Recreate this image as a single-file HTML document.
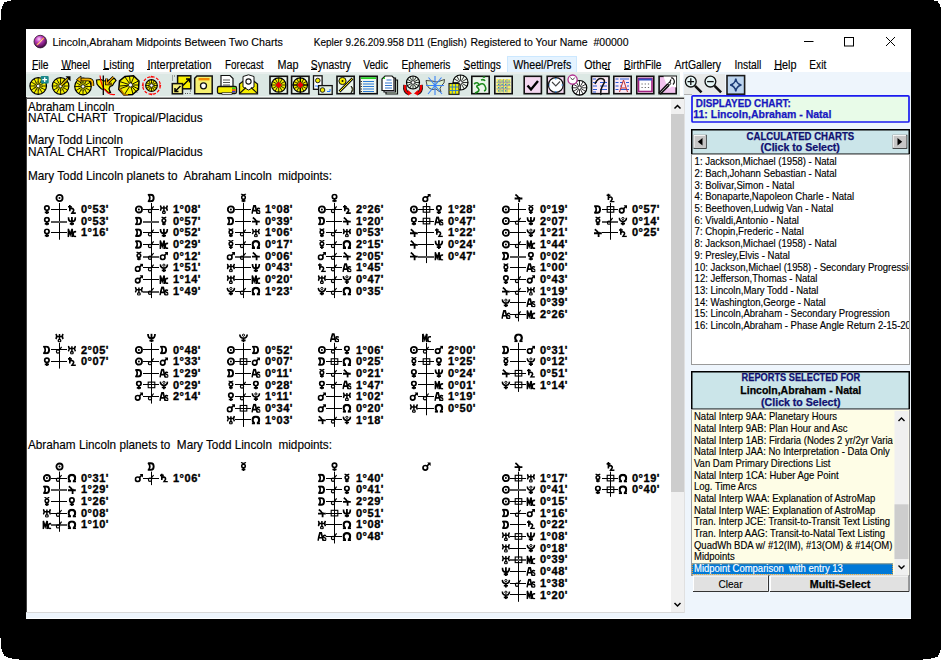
<!DOCTYPE html>
<html><head><meta charset="utf-8">
<style>
html,body{margin:0;padding:0;background:#fff;width:941px;height:660px;overflow:hidden}
svg{display:block}
text{font-family:"Liberation Sans",sans-serif;white-space:pre}
.deg{font-family:"Liberation Sans",sans-serif;font-weight:bold;font-size:11px;fill:#000;stroke:#000;stroke-width:0.35px;letter-spacing:0.5px}
.ui{font-size:11.5px;fill:#000;stroke:#000;stroke-width:0.15px}
.mn{font-size:12.3px;fill:#000;stroke:#000;stroke-width:0.15px}
.rt{font-size:12.4px;fill:#000;stroke:#000;stroke-width:0.15px}
.rp{font-size:10px;fill:#000;stroke:#000;stroke-width:0.15px}
.rpb{font-size:10px;font-weight:bold;stroke-width:0.25px}
</style></head><body>

<svg width="0" height="0" style="position:absolute">
<defs>
<symbol id="g-sun" viewBox="0 0 9 9"><circle cx="4.5" cy="4.5" r="3.1" fill="none" stroke="#000" stroke-width="1.8"/><circle cx="4.5" cy="4.5" r="1" fill="#000"/></symbol>
<symbol id="g-moon" viewBox="0 0 9 9"><path d="M1.6,1.2 H3.9 C7.6,1.2 7.6,7.8 3.9,7.8 H1.6 C3.1,6 3.1,3 1.6,1.2 Z" fill="none" stroke="#000" stroke-width="1.9" stroke-linejoin="round"/></symbol>
<symbol id="g-mer" viewBox="0 0 9 9"><path d="M2.2,0.2 Q4.5,2.6 6.8,0.2" fill="none" stroke="#000" stroke-width="1.4"/><circle cx="4.5" cy="3.9" r="1.8" fill="none" stroke="#000" stroke-width="1.5"/><path d="M4.5,5.6V9M2.6,7.4H6.4" stroke="#000" stroke-width="1.6"/></symbol>
<symbol id="g-ven" viewBox="0 0 9 9"><circle cx="4.5" cy="3.2" r="2.2" fill="none" stroke="#000" stroke-width="1.7"/><path d="M4.5,5.3V9M2.4,7.4H6.6" stroke="#000" stroke-width="1.7"/></symbol>
<symbol id="g-mar" viewBox="0 0 9 9"><circle cx="3.3" cy="5.7" r="2.3" fill="none" stroke="#000" stroke-width="1.7"/><path d="M5.1,3.9L7.4,1.6" stroke="#000" stroke-width="1.7"/><path d="M5.2,0.4H8.6V3.8Z" fill="#000"/></symbol>
<symbol id="g-jup" viewBox="0 0 9 9"><path d="M1.4,0.9 Q3.8,2.4 4.9,4.9 M0.6,5 H8.4 M5.2,3.6 V8.8" fill="none" stroke="#000" stroke-width="1.8"/></symbol>
<symbol id="g-sat" viewBox="0 0 9 9"><path d="M2.4,0V6.4M0.6,1.8H4.4M2.4,4.4 Q4.6,2.6 6,4.4 Q6.8,5.6 5.2,7.2 L4.6,8.2 H8.4" fill="none" stroke="#000" stroke-width="1.6"/></symbol>
<symbol id="g-ura" viewBox="0 0 9 9"><path d="M0.9,0.6 Q2.7,3.2 0.9,5.8M8.1,0.6 Q6.3,3.2 8.1,5.8M1.8,3.2H7.2M4.5,0.8V6" fill="none" stroke="#000" stroke-width="1.5"/><circle cx="4.5" cy="7.4" r="1.3" fill="none" stroke="#000" stroke-width="1.3"/></symbol>
<symbol id="g-nep" viewBox="0 0 9 9"><path d="M1,0.8 Q1,5.2 4.5,5.2 Q8,5.2 8,0.8M4.5,0.4V9M2.4,7.3H6.6" fill="none" stroke="#000" stroke-width="1.8"/></symbol>
<symbol id="g-plu" viewBox="0 0 9 9"><path d="M0.8,1.2 Q1.2,4.9 4.5,4.9 Q7.8,4.9 8.2,1.2M4.5,4.9V9M2.4,7.1H6.6" fill="none" stroke="#000" stroke-width="1.7"/><circle cx="4.5" cy="1.9" r="1.1" fill="none" stroke="#000" stroke-width="1"/></symbol>
<symbol id="g-node" viewBox="0 0 9 9"><path d="M3,7.9 Q1,6.6 1.2,4.2 Q1.5,1.2 4.5,1.2 Q7.5,1.2 7.8,4.2 Q8,6.6 6,7.9" fill="none" stroke="#000" stroke-width="2.2"/><path d="M0.4,8.1H3.6M5.4,8.1H8.6" stroke="#000" stroke-width="1.8"/></symbol>
<symbol id="g-as" viewBox="0 0 9 9"><path d="M0.4,8.8L2.6,0.6H3.8L5.8,8.8M1.4,5.8H4.8" fill="none" stroke="#000" stroke-width="1.7"/><path d="M8.8,3.9 Q6.2,2.7 6,4.5 Q6,5.5 7.5,5.9 Q9.2,6.5 8.6,7.9 Q7.6,9 5.8,8.2" fill="none" stroke="#000" stroke-width="1.5"/></symbol>
<symbol id="g-mc" viewBox="0 0 9 9"><path d="M0.8,9V0.6L2.8,6.4L4.8,0.6V9" fill="none" stroke="#000" stroke-width="1.7"/><path d="M8.9,3.6 Q5.8,2.8 5.8,6 Q5.8,9.2 8.9,8.2" fill="none" stroke="#000" stroke-width="1.7"/></symbol>
<symbol id="a-conj" viewBox="0 0 9 9"><circle cx="3" cy="6.1" r="1.6" fill="none" stroke="#000" stroke-width="1.2"/><path d="M4.1,4.9 L6.6,1.4" stroke="#000" stroke-width="1.2"/></symbol>
<symbol id="a-sq" viewBox="0 0 9 9"><rect x="1.2" y="1.7" width="6.6" height="5.6" fill="none" stroke="#000" stroke-width="1.1"/></symbol>
</defs></svg>

<svg width="941" height="660" viewBox="0 0 941 660">
<rect width="941" height="660" fill="#fff"/>
<path d="M11,0 L934,0 L934,1 L938,1 L938,3 L939,3 L939,4 L940,4 L940,7 L941,7 L941,650 L940,650 L940,653 L939,653 L939,655 L938,655 L938,657 L935,657 L935,658 L931,658 L931,659 L923,659 L923,660 L19,660 L19,659 L12,659 L12,658 L8,658 L8,657 L6,657 L6,656 L4,656 L4,654 L3,654 L3,652 L2,652 L2,649 L1,649 L1,638 L0,638 L0,20 L1,20 L1,9 L2,9 L2,6 L3,6 L3,4 L4,4 L4,2 L7,2 L7,1 L11,1 Z" fill="#000" shape-rendering="crispEdges"/>
<!-- window -->
<rect x="26" y="29" width="885" height="590" fill="#fff"/>
<!-- title bar -->
<defs><radialGradient id="ico" cx="0.4" cy="0.3" r="0.75"><stop offset="0" stop-color="#ffd0ff"/><stop offset="0.35" stop-color="#c040c0"/><stop offset="0.8" stop-color="#601060"/><stop offset="1" stop-color="#200020"/></radialGradient></defs>
<circle cx="40.3" cy="41.6" r="6.3" fill="url(#ico)" stroke="#2a102a" stroke-width="0.8"/>
<path d="M36.8,45.2 L43.8,38" stroke="#ffa040" stroke-width="1.2"/><path d="M38,44.5 L42.5,39.5" stroke="#ffffff" stroke-width="0.6"/>
<text class="ui" x="52.5" y="45.6" textLength="230.3" lengthAdjust="spacingAndGlyphs">Lincoln,Abraham Midpoints Between Two Charts</text>
<text class="ui" x="313.7" y="45.6" textLength="153.1" lengthAdjust="spacingAndGlyphs">Kepler 9.26.209.958 D11 (English)</text>
<text class="ui" x="470.4" y="45.6" textLength="158.1" lengthAdjust="spacingAndGlyphs">Registered to Your Name  #00000</text>
<rect x="804" y="41" width="9.5" height="1" fill="#000"/>
<rect x="844.5" y="37.5" width="9" height="8.5" fill="none" stroke="#000" stroke-width="1"/>
<path d="M886,37 L895,46 M895,37 L886,46" stroke="#000" stroke-width="1"/>
<!-- menu -->
<rect x="507.5" y="56.5" width="69" height="16" fill="#e5f3ff" stroke="#cce8ff" stroke-width="1"/>
<g class="ui">
<text class="mn" x="32" y="68.5" textLength="16.6" lengthAdjust="spacingAndGlyphs">File</text>
<text class="mn" x="61.4" y="68.5" textLength="28.6" lengthAdjust="spacingAndGlyphs">Wheel</text>
<text class="mn" x="103.3" y="68.5" textLength="31" lengthAdjust="spacingAndGlyphs">Listing</text>
<text class="mn" x="147.5" y="68.5" textLength="64.1" lengthAdjust="spacingAndGlyphs">Interpretation</text>
<text class="mn" x="225" y="68.5" textLength="38.6" lengthAdjust="spacingAndGlyphs">Forecast</text>
<text class="mn" x="277.6" y="68.5" textLength="21" lengthAdjust="spacingAndGlyphs">Map</text>
<text class="mn" x="310.8" y="68.5" textLength="40.2" lengthAdjust="spacingAndGlyphs">Synastry</text>
<text class="mn" x="363.2" y="68.5" textLength="24.8" lengthAdjust="spacingAndGlyphs">Vedic</text>
<text class="mn" x="401.4" y="68.5" textLength="49.1" lengthAdjust="spacingAndGlyphs">Ephemeris</text>
<text class="mn" x="463.5" y="68.5" textLength="37.3" lengthAdjust="spacingAndGlyphs">Settings</text>
<text class="mn" x="513.3" y="68.5" textLength="58" lengthAdjust="spacingAndGlyphs">Wheel/Prefs</text>
<text class="mn" x="584.3" y="68.5" textLength="26.7" lengthAdjust="spacingAndGlyphs">Other</text>
<text class="mn" x="623.8" y="68.5" textLength="37.8" lengthAdjust="spacingAndGlyphs">BirthFile</text>
<text class="mn" x="674.6" y="68.5" textLength="46.4" lengthAdjust="spacingAndGlyphs">ArtGallery</text>
<text class="mn" x="734.5" y="68.5" textLength="26.9" lengthAdjust="spacingAndGlyphs">Install</text>
<text class="mn" x="774.2" y="68.5" textLength="22.3" lengthAdjust="spacingAndGlyphs">Help</text>
<text class="mn" x="809.3" y="68.5" textLength="17" lengthAdjust="spacingAndGlyphs">Exit</text>
</g>
<g fill="#000">
<rect x="32" y="69" width="6" height="1"/>
<rect x="61" y="69" width="10" height="1"/>
<rect x="103" y="69" width="6" height="1"/>
<rect x="147" y="69" width="3" height="1"/>
<rect x="311" y="69" width="6" height="1"/>
<rect x="463" y="69" width="6" height="1"/>
<rect x="605" y="69" width="5" height="1"/>
<rect x="624" y="69" width="7" height="1"/>
<rect x="774" y="69" width="8" height="1"/>
</g>
<!-- right panel bg -->
<rect x="683" y="72" width="228" height="547" fill="#eef5fc"/>
<rect x="26" y="613" width="885" height="6" fill="#eef5fc"/>
<rect x="26" y="618" width="885" height="1" fill="#fff"/>
<!-- toolbar -->
<rect x="26" y="72" width="654" height="25" fill="#dce8e4"/>
<rect x="26" y="72" width="654" height="2" fill="#e8eeec"/>
<rect x="684" y="74" width="41" height="21" fill="#e7e9e9"/><rect x="684" y="94" width="8" height="1" fill="#b0b0b0"/>
<circle cx="38.2" cy="86" r="8.3" fill="#f6f000" stroke="#000" stroke-width="1.2"/><path d="M40.40,86.00L46.50,86.00M40.11,87.10L45.39,90.15M39.30,87.91L42.35,93.19M38.20,88.20L38.20,94.30M37.10,87.91L34.05,93.19M36.29,87.10L31.01,90.15M36.00,86.00L29.90,86.00M36.29,84.90L31.01,81.85M37.10,84.09L34.05,78.81M38.20,83.80L38.20,77.70M39.30,84.09L42.35,78.81M40.11,84.90L45.39,81.85" stroke="#000" stroke-width="0.8"/><circle cx="38.2" cy="86" r="4.15" fill="none" stroke="#000" stroke-width="0.6" stroke-dasharray="1.2 1.4"/><circle cx="38.2" cy="86" r="1.8" fill="#fff" stroke="#000" stroke-width="0.8"/><rect x="40.7" y="75.9" width="8" height="7.6" rx="1" fill="#18878a"/><path d="M44.7,77.3V82.1M42.3,79.7H47.1" stroke="#fff" stroke-width="1.3"/><circle cx="60.6" cy="86" r="8.3" fill="#f6f000" stroke="#000" stroke-width="1.2"/><path d="M62.80,86.00L68.90,86.00M62.51,87.10L67.79,90.15M61.70,87.91L64.75,93.19M60.60,88.20L60.60,94.30M59.50,87.91L56.45,93.19M58.69,87.10L53.41,90.15M58.40,86.00L52.30,86.00M58.69,84.90L53.41,81.85M59.50,84.09L56.45,78.81M60.60,83.80L60.60,77.70M61.70,84.09L64.75,78.81M62.51,84.90L67.79,81.85" stroke="#000" stroke-width="0.8"/><circle cx="60.6" cy="86" r="4.15" fill="none" stroke="#000" stroke-width="0.6" stroke-dasharray="1.2 1.4"/><circle cx="60.6" cy="86" r="1.8" fill="#fff" stroke="#000" stroke-width="0.8"/><path d="M61,85.5L68.6,77.6" stroke="#000" stroke-width="2.6"/><path d="M61,85.5L68.6,77.6" stroke="#f0c800" stroke-width="1.2"/><path d="M65.5,76.2H70.5V81.2Z" fill="#000"/><circle cx="83" cy="86.5" r="8.3" fill="#f6f000" stroke="#000" stroke-width="1.2"/><path d="M85.20,86.50L91.30,86.50M84.91,87.60L90.19,90.65M84.10,88.41L87.15,93.69M83.00,88.70L83.00,94.80M81.90,88.41L78.85,93.69M81.09,87.60L75.81,90.65M80.80,86.50L74.70,86.50M81.09,85.40L75.81,82.35M81.90,84.59L78.85,79.31M83.00,84.30L83.00,78.20M84.10,84.59L87.15,79.31M84.91,85.40L90.19,82.35" stroke="#000" stroke-width="0.8"/><circle cx="83" cy="86.5" r="4.15" fill="none" stroke="#000" stroke-width="0.6" stroke-dasharray="1.2 1.4"/><circle cx="83" cy="86.5" r="1.8" fill="#fff" stroke="#000" stroke-width="0.8"/><path d="M78,79.5 H88 Q92.5,79.5 92.5,83.5 V86" fill="none" stroke="#000" stroke-width="3.4"/><path d="M78,79.5 H88 Q92.5,79.5 92.5,83.5 V86" fill="none" stroke="#f0b000" stroke-width="1.8"/><path d="M81,76 L76.5,79.5 L81,83Z" fill="#f0b000" stroke="#000" stroke-width="0.8"/><path d="M96.5,80 L101,79.5 L104,81 L108,80.5 L111,79 L114.5,78.5 L116,80.5 L114,83 L112.5,85.5 L110,86.5 L109,89 L110.5,92.5 L107.5,92 L105,89.5 L101.5,89 L99,86.5 L97,84Z" fill="#f6f000" stroke="#000" stroke-width="1.2"/><path d="M113.5,77 L107,83.5 M106.5,78.5 V84 H112" fill="none" stroke="#000" stroke-width="2.6"/><path d="M113.5,77 L107,83.5 M106.5,78.5 V84 H112" fill="none" stroke="#f0a800" stroke-width="1.1"/><path d="M100,75.5 Q101,88 108,93 Q111,95 115,94.5" fill="none" stroke="#f00" stroke-width="1.1"/><path d="M103.3,75.5V95" stroke="#000" stroke-width="1.3"/><path d="M125,76.5 L133.5,75.8 L139,81 L138.5,89.5 L132.5,94.5 L124,95 L118.8,89.5 L119.5,81Z" fill="#f6f000" stroke="#000" stroke-width="1.5"/><path d="M130.5,85 L125,77 M130.5,85 L134,76.5 M130.5,85 L138.5,81 M130.5,85 L138.5,89 M130.5,85 L133,94 M130.5,85 L124.5,94.5 M130.5,85 L119.5,89 M130.5,85 L119.5,81.5 M130.5,85 L129.5,76 M130.5,85 L137,92.5 M130.5,85 L120,86 M130.5,85 L138.5,85" stroke="#000" stroke-width="0.9"/><path d="M119.5,88 L124,94.5 L128,94.8" fill="none" stroke="#b07000" stroke-width="1.6"/><circle cx="130.5" cy="85" r="2" fill="#fff" stroke="#000" stroke-width="0.6"/><circle cx="151.5" cy="85.5" r="8.8" fill="none" stroke="#f00" stroke-width="1.2" stroke-dasharray="3 1.6"/><circle cx="151.5" cy="85.5" r="5.8" fill="#f6f000" stroke="#000" stroke-width="1.2"/><path d="M153.70,85.50L157.30,85.50M153.41,86.60L156.52,88.40M152.60,87.41L154.40,90.52M151.50,87.70L151.50,91.30M150.40,87.41L148.60,90.52M149.59,86.60L146.48,88.40M149.30,85.50L145.70,85.50M149.59,84.40L146.48,82.60M150.40,83.59L148.60,80.48M151.50,83.30L151.50,79.70M152.60,83.59L154.40,80.48M153.41,84.40L156.52,82.60" stroke="#000" stroke-width="0.8"/><circle cx="151.5" cy="85.5" r="2.90" fill="none" stroke="#000" stroke-width="0.6" stroke-dasharray="1.2 1.4"/><circle cx="151.5" cy="85.5" r="1.8" fill="#fff" stroke="#000" stroke-width="0.8"/><path d="M151.5,75.6l-1.5,2h3Z M151.5,95.4l-1.5,-2h3Z M141.6,85.5l2,-1.5v3Z M161.4,85.5l-2,-1.5v3Z" fill="#f00"/><rect x="177.6" y="75.8" width="13.2" height="13" fill="#f8f000" stroke="#111" stroke-width="1.5"/><rect x="172.3" y="83.6" width="10.2" height="10.2" fill="#f6f080" stroke="#111" stroke-width="1.5"/><path d="M183,85.5 L189,79.5 M186,79 H189.5 V82.5" fill="none" stroke="#000" stroke-width="1.3"/><path d="M180.5,86 L175,91.5 M175,88 V91.5 H178.5" fill="none" stroke="#000" stroke-width="1.5"/><path d="M172,76 h1 M172,78 h1 M172,80 h1 M174,76 h1 M185,93.5 h1 M187,93.5 h1 M189.5,93.5 h1 M190,91 h1" stroke="#555" stroke-width="1"/><path d="M197,76 H212.2 V93.8 H194.7 V78.3Z" fill="#f6f070" stroke="#111" stroke-width="1.5"/><rect x="198.5" y="78" width="11" height="2.4" fill="#f08a00"/><circle cx="203.5" cy="85.8" r="3" fill="#fff" stroke="#111" stroke-width="1.3"/><path d="M221,75.5 H230 L233,78.5 V88 H221Z" fill="#fff" stroke="#111" stroke-width="1.2"/><path d="M223,80h7M223,82.5h7M223,85h7" stroke="#444" stroke-width="0.9"/><rect x="217.5" y="86.5" width="19" height="7" rx="1.5" fill="#f6ee00" stroke="#111" stroke-width="1.3"/><rect x="232" y="87.5" width="3.5" height="1.4" fill="#2c2"/><rect x="232" y="89.3" width="3.5" height="1.4" fill="#e22"/><rect x="232" y="91.1" width="3.5" height="1.4" fill="#22e"/><rect x="222" y="92.8" width="10" height="1.5" fill="#fff" stroke="#111" stroke-width="0.6"/><path d="M239.5,84 L248.5,77 L257.5,84 V93.8 H239.5Z" fill="#f6ee00" stroke="#111" stroke-width="1.3"/><path d="M243,76.5 L248.5,74.8 L254,76.5 V87 L248.5,90 L243,87Z" fill="#fff" stroke="#111" stroke-width="1"/><circle cx="248.5" cy="81.5" r="2.6" fill="none" stroke="#111" stroke-width="1.1"/><path d="M239.5,93.5 L246,87.5 M257.5,93.5 L251,87.5" stroke="#111" stroke-width="1.1"/><rect x="270.0" y="76.3" width="17.4" height="17.4" fill="#eaf5ea" stroke="#111" stroke-width="1.6"/><circle cx="278.7" cy="85" r="7.2" fill="#f6f000" stroke="#000" stroke-width="1.2"/><path d="M280.90,85.00L285.90,85.00M280.61,86.10L284.94,88.60M279.80,86.91L282.30,91.24M278.70,87.20L278.70,92.20M277.60,86.91L275.10,91.24M276.79,86.10L272.46,88.60M276.50,85.00L271.50,85.00M276.79,83.90L272.46,81.40M277.60,83.09L275.10,78.76M278.70,82.80L278.70,77.80M279.80,83.09L282.30,78.76M280.61,83.90L284.94,81.40" stroke="#000" stroke-width="0.8"/><circle cx="278.7" cy="85" r="1.8" fill="#fff" stroke="#000" stroke-width="0.8"/><path d="M278.7,81.8 L281.9,85 L278.7,88.2 L275.5,85Z" fill="#e00"/><rect x="291.6" y="76.3" width="17.4" height="17.4" fill="#eaf5ea" stroke="#111" stroke-width="1.6"/><circle cx="300.3" cy="85" r="7.2" fill="#f6f000" stroke="#000" stroke-width="1.2"/><path d="M302.50,85.00L307.50,85.00M302.21,86.10L306.54,88.60M301.40,86.91L303.90,91.24M300.30,87.20L300.30,92.20M299.20,86.91L296.70,91.24M298.39,86.10L294.06,88.60M298.10,85.00L293.10,85.00M298.39,83.90L294.06,81.40M299.20,83.09L296.70,78.76M300.30,82.80L300.30,77.80M301.40,83.09L303.90,78.76M302.21,83.90L306.54,81.40" stroke="#000" stroke-width="0.8"/><circle cx="300.3" cy="85" r="3.60" fill="none" stroke="#000" stroke-width="0.6" stroke-dasharray="1.2 1.4"/><circle cx="300.3" cy="85" r="1.8" fill="#fff" stroke="#000" stroke-width="0.8"/><path d="M300.3,77V93M292.3,85H308.3" stroke="#000" stroke-width="1.1"/><path d="M300.3,81.8 L303.5,85 L300.3,88.2 L297.1,85Z" fill="#e00"/><rect x="313.5" y="75.8" width="8.6" height="13.5" fill="#fff" stroke="#111" stroke-width="1.3"/><circle cx="317.8" cy="80.5" r="2.3" fill="#f2ea00" stroke="#111" stroke-width="0.9"/><path d="M315,86h3v1.5" stroke="#27f" stroke-width="0.9" fill="none"/><rect x="318.6" y="85.6" width="13.6" height="8.8" fill="#e6f2e6" stroke="#111" stroke-width="1.3"/><circle cx="322.5" cy="90" r="2.3" fill="#f2ea00" stroke="#111" stroke-width="0.9"/><path d="M327,91.5h3v-2.5" stroke="#27f" stroke-width="1" fill="none"/><rect x="337.0" y="76.3" width="17.20000000000001" height="17.4" fill="#eaf5ea" stroke="#111" stroke-width="1.6"/><circle cx="342.5" cy="81" r="3.6" fill="#f2ea00" stroke="#111" stroke-width="1"/><circle cx="342.5" cy="81" r="1" fill="#111"/><path d="M339.5,91.5 L352.5,78.5" stroke="#111" stroke-width="2.6"/><path d="M339.5,91.5 L352.5,78.5" stroke="#f2ea00" stroke-width="1"/><path d="M351,86 Q355,89 351,93 Q353.5,89 351,86Z" fill="#f2ea00" stroke="#111" stroke-width="0.8"/><rect x="359.8" y="76.3" width="17.4" height="17.4" fill="#eef6ee" stroke="#111" stroke-width="1.6"/><rect x="361" y="77.3" width="15" height="1.6" fill="#1c1"/><path d="M363,81.5h11M363,84h11M363,86.5h11M363,89h11M363,91.5h11" stroke="#2a7bd6" stroke-width="1"/><path d="M360.8,81.5h1M360.8,84h1M360.8,86.5h1M360.8,89h1M360.8,91.5h1" stroke="#000" stroke-width="1"/><path d="M386,80 H397.5 V94 H386Z" fill="#d6ead6" stroke="#111" stroke-width="1.2"/><path d="M384,78 H395.5 V92 H384Z" fill="#eef" stroke="#111" stroke-width="1.2"/><path d="M385,76 H392 L394,78 V90.5 H382 V79Z" fill="#fff" stroke="#111" stroke-width="1.2"/><path d="M386.5,80h5M385,83h7M385,85.5h7M385,88h7" stroke="#37c" stroke-width="1"/><path d="M382.5,79 L385,76.5 V79Z" fill="#3c3"/><circle cx="413" cy="82.5" r="6.5" fill="#e8f4e8" stroke="#000" stroke-width="1.2"/><path d="M415.20,82.50L419.50,82.50M414.91,83.60L418.63,85.75M414.10,84.41L416.25,88.13M413.00,84.70L413.00,89.00M411.90,84.41L409.75,88.13M411.09,83.60L407.37,85.75M410.80,82.50L406.50,82.50M411.09,81.40L407.37,79.25M411.90,80.59L409.75,76.87M413.00,80.30L413.00,76.00M414.10,80.59L416.25,76.87M414.91,81.40L418.63,79.25" stroke="#000" stroke-width="0.8"/><circle cx="413" cy="82.5" r="1.8" fill="#fff" stroke="#000" stroke-width="0.8"/><path d="M405,85 Q404,92 409,93.5 M421,85 Q422,92 417,93.5" fill="none" stroke="#111" stroke-width="3.6"/><path d="M405,85 Q404,92 409,93.5 M421,85 Q422,92 417,93.5" fill="none" stroke="#e00" stroke-width="2.2"/><path d="M408,90 L412,93.5 L408,95.5Z M418,90 L414,93.5 L418,95.5Z" fill="#e00"/><path d="M426,80.5 L432,81 L437,82 L440,81 L444.5,79.5 L444,83 L441.5,85.5 L440,88.5 L441,92 L438.5,91 L436,89 L432,89.5 L429,88 L427,85Z" fill="#dcefd0" stroke="#222" stroke-width="0.8"/><path d="M435,76V95M426,85.5H444M428.5,77.5L442,94M441.5,77.5L428,94" stroke="#3b82f6" stroke-width="1.1"/><circle cx="460.5" cy="82.5" r="7.5" fill="#eef6ee" stroke="#000" stroke-width="1.2"/><path d="M462.70,82.50L468.00,82.50M462.41,83.60L467.00,86.25M461.60,84.41L464.25,89.00M460.50,84.70L460.50,90.00M459.40,84.41L456.75,89.00M458.59,83.60L454.00,86.25M458.30,82.50L453.00,82.50M458.59,81.40L454.00,78.75M459.40,80.59L456.75,76.00M460.50,80.30L460.50,75.00M461.60,80.59L464.25,76.00M462.41,81.40L467.00,78.75" stroke="#000" stroke-width="0.8"/><circle cx="460.5" cy="82.5" r="1.8" fill="#fff" stroke="#000" stroke-width="0.8"/><rect x="449" y="83.5" width="10" height="10.8" fill="#f6ee00" stroke="#111" stroke-width="1.1"/><path d="M452.3,84v10M455.6,84v10M449.5,87h9M449.5,90.5h9" stroke="#27c" stroke-width="0.9"/><rect x="471.8" y="76.3" width="17.4" height="17.4" fill="#eaf5ea" stroke="#111" stroke-width="1.6"/><path d="M474,84 Q478,81 479,85 Q475,86 478,88 Q481,91 475,93 M479,85 Q483,82 485,86 Q487,90 484,91 M481,80 Q484,79 485,81 M483,77.5 Q484,76.5 485,77.5" fill="none" stroke="#1a8a1a" stroke-width="1.6"/><rect x="494.8" y="76.3" width="17.4" height="17.4" fill="#eef6ee" stroke="#111" stroke-width="1.6"/><rect x="496.5" y="79" width="14" height="13.5" fill="#f8f060"/><path d="M496.5,82.3h14M496.5,85.6h14M496.5,88.9h14M500,79v13.5M503.5,79v13.5M507,79v13.5" stroke="#8a8ab0" stroke-width="0.8"/><path d="M498,81h1.2M501.5,81h1.2M505,81h1.2M508.5,81h1.2M498,84.3h1.2M501.5,84.3h1.2M505,84.3h1.2M508.5,84.3h1.2M498,87.6h1.2M501.5,87.6h1.2M505,87.6h1.2M498,90.9h1.2M501.5,90.9h1.2M505,90.9h1.2" stroke="#18c" stroke-width="1.2"/><rect x="524.1999999999999" y="76.3" width="17.200000000000067" height="17.4" fill="#f4d8f0" stroke="#111" stroke-width="1.6"/><path d="M527.5,85.5 L531,89.5 L538,81" fill="none" stroke="#000" stroke-width="2.4"/><rect x="547.1999999999999" y="76.3" width="17.200000000000067" height="17.4" fill="#f4d8f0" stroke="#111" stroke-width="1.6"/><circle cx="555.8" cy="85" r="7.4" fill="#fff" stroke="#111" stroke-width="1.2"/><path d="M552,82 L555.8,86 L560,81.5" fill="none" stroke="#444" stroke-width="1.1"/><path d="M555.8,78v1.4M555.8,91v1.4M548.7,85h1.4M561.5,85h1.4" stroke="#2a8af0" stroke-width="1.2"/><circle cx="579.5" cy="87.8" r="7.3" fill="#fff" stroke="#000" stroke-width="1.2"/><path d="M581.70,87.80L586.80,87.80M581.41,88.90L585.82,91.45M580.60,89.71L583.15,94.12M579.50,90.00L579.50,95.10M578.40,89.71L575.85,94.12M577.59,88.90L573.18,91.45M577.30,87.80L572.20,87.80M577.59,86.70L573.18,84.15M578.40,85.89L575.85,81.48M579.50,85.60L579.50,80.50M580.60,85.89L583.15,81.48M581.41,86.70L585.82,84.15" stroke="#000" stroke-width="0.8"/><circle cx="579.5" cy="87.8" r="1.8" fill="#fff" stroke="#000" stroke-width="0.8"/><circle cx="572.6" cy="79.6" r="4.6" fill="#fff" stroke="#b03090" stroke-width="1.3"/><path d="M570.5,77.5 L572.6,80 L574.8,77.5" fill="none" stroke="#333" stroke-width="0.9"/><rect x="591.5" y="76.3" width="17.499999999999908" height="17.4" fill="#fbeaf6" stroke="#111" stroke-width="1.6"/><path d="M593,79h3M593,82.5h4M600,82.5h7M593,86h4M600,86h7M593,89.5h4M600,89.5h7M593,92h3" stroke="#2a5ad6" stroke-width="1"/><path d="M595,84 Q598,77 603,79 Q606,80.5 603,85 Q600,90 601,95" fill="none" stroke="#111" stroke-width="1.5"/><rect x="613.8" y="76.3" width="17.4" height="17.4" fill="#fbeaf6" stroke="#111" stroke-width="1.6"/><path d="M615.5,79h3M615.5,82.5h3M615.5,86h3M615.5,89.5h3M620,79h9M620,82.5h3M626,82.5h3M620,86h2M627,86h2M620,89.5h9" stroke="#2a5ad6" stroke-width="1"/><path d="M619.5,92 L623.5,80 L627.5,92M621,88h5" fill="none" stroke="#c03030" stroke-width="1"/><rect x="636.8" y="76.3" width="17.00000000000002" height="17.4" fill="#fbeaf6" stroke="#111" stroke-width="1.6"/><rect x="638.5" y="78.5" width="13.5" height="13" fill="#fff" stroke="#a02080" stroke-width="1.6"/><rect x="638.5" y="78.5" width="13.5" height="2" fill="#3050c0"/><path d="M641.5,84h1.2M644.7,84h1.2M647.9,84h1.2M641.5,87.5h1.2M644.7,87.5h1.2M647.9,87.5h1.2" stroke="#666" stroke-width="1.2"/><rect x="659.0999999999999" y="76.3" width="17.100000000000044" height="17.4" fill="#f2c2ee" stroke="#111" stroke-width="1.6"/><path d="M663.5,76.6 H676.2 V87.6 L672,86.5 L669,88.5 L667,86 Z" fill="#fff"/><path d="M659.6,93.6 L668.5,84.5" stroke="#111" stroke-width="3.4"/><path d="M660.5,92.6 L668,85" stroke="#999" stroke-width="1"/><path d="M669.5,83 L671,79.5 M673,84.5 Q675.5,82 673.5,79 Q672.5,77.5 671,78" fill="none" stroke="#111" stroke-width="1.2"/><circle cx="669.5" cy="83.5" r="1.2" fill="none" stroke="#111" stroke-width="0.9"/><circle cx="690.8" cy="81.6" r="5.4" fill="#e6f6f6" stroke="#111" stroke-width="1.3"/><path d="M690.8,78.3v6.6M687.5,81.6h6.6" stroke="#111" stroke-width="1.3"/><path d="M695,85.8 L701.5,92.3" stroke="#111" stroke-width="2.6"/><circle cx="710.4" cy="81.6" r="5.4" fill="#e6f6f6" stroke="#111" stroke-width="1.3"/><path d="M707.1,81.6h6.6" stroke="#111" stroke-width="1.3"/><path d="M714.6,85.8 L721.1,92.3" stroke="#111" stroke-width="2.6"/><rect x="727" y="75.6" width="17.6" height="18.6" fill="#bcd4ee" stroke="#1a1a1a" stroke-width="1.6"/><path d="M735.8,78.6 Q736.6,84 741.4,85 Q736.6,86 735.8,91.4 Q735,86 730.2,85 Q735,84 735.8,78.6Z" fill="none" stroke="#1c3c78" stroke-width="1.5"/>
<!-- content -->
<rect x="26" y="97" width="659" height="516" fill="#fff"/>
<rect x="26" y="96" width="659" height="1" fill="#eef6f3"/><rect x="26" y="97" width="659" height="1" fill="#a0a0a0"/><rect x="26" y="98" width="659" height="1" fill="#3c3c3c"/>
<rect x="26" y="97" width="1" height="516" fill="#404040"/>
<rect x="26" y="612" width="659" height="1" fill="#d8d8d8"/>
<rect x="684" y="97" width="1" height="516" fill="#e0e0e0"/>
<!-- scrollbar -->
<rect x="671" y="99" width="13" height="513" fill="#f0f0f0"/>
<rect x="671" y="114" width="13" height="378" fill="#cdcdcd"/>
<path d="M674.5,108.5 L677.5,105.5 L680.5,108.5" fill="none" stroke="#000" stroke-width="1.5"/>
<path d="M674.5,603 L677.5,606 L680.5,603" fill="none" stroke="#000" stroke-width="1.5"/>
<!-- report text -->
<text class="rt" x="28" y="110.8" textLength="86.3" lengthAdjust="spacingAndGlyphs">Abraham Lincoln</text>
<text class="rt" x="28" y="122" textLength="174.7" lengthAdjust="spacingAndGlyphs">NATAL CHART  Tropical/Placidus</text>
<text class="rt" x="28" y="144.3" textLength="95" lengthAdjust="spacingAndGlyphs">Mary Todd Lincoln</text>
<text class="rt" x="28" y="156" textLength="174.7" lengthAdjust="spacingAndGlyphs">NATAL CHART  Tropical/Placidus</text>
<text class="rt" x="28" y="180" textLength="304" lengthAdjust="spacingAndGlyphs">Mary Todd Lincoln planets to  Abraham Lincoln  midpoints:</text>
<text class="rt" x="28" y="448.7" textLength="304" lengthAdjust="spacingAndGlyphs">Abraham Lincoln planets to  Mary Todd Lincoln  midpoints:</text>
<use href="#g-sun" x="55.0" y="193.5" width="9" height="9"/><rect x="59" y="203" width="1" height="36.74" fill="#000"/><rect x="51" y="209" width="16" height="1" fill="#000"/><use href="#g-ven" x="42.4" y="204.9" width="9" height="9"/><use href="#g-sat" x="67.4" y="204.9" width="9" height="9"/><text x="81" y="213.10" class="deg">0°53'</text><rect x="51" y="221" width="16" height="2" fill="#555"/><use href="#g-ven" x="42.4" y="216.57" width="9" height="9"/><use href="#g-nep" x="67.4" y="216.57" width="9" height="9"/><text x="81" y="224.77" class="deg">0°53'</text><rect x="51" y="232" width="16" height="1" fill="#000"/><use href="#g-ven" x="42.4" y="228.24" width="9" height="9"/><use href="#g-mc" x="67.4" y="228.24" width="9" height="9"/><text x="81" y="236.44" class="deg">1°16'</text><use href="#g-moon" x="147.0" y="193.5" width="9" height="9"/><rect x="151" y="203" width="1" height="95.09" fill="#000"/><rect x="143" y="209" width="16" height="1" fill="#000"/><use href="#g-sun" x="134.4" y="204.9" width="9" height="9"/><use href="#g-ura" x="159.4" y="204.9" width="9" height="9"/><use href="#a-conj" x="147.0" y="204.9" width="9" height="9"/><text x="173" y="213.10" class="deg">1°08'</text><rect x="143" y="221" width="16" height="2" fill="#555"/><use href="#g-moon" x="134.4" y="216.57" width="9" height="9"/><use href="#g-mer" x="159.4" y="216.57" width="9" height="9"/><text x="173" y="224.77" class="deg">0°57'</text><rect x="143" y="232" width="16" height="1" fill="#000"/><use href="#g-moon" x="134.4" y="228.24" width="9" height="9"/><use href="#g-nep" x="159.4" y="228.24" width="9" height="9"/><use href="#a-conj" x="147.0" y="228.24" width="9" height="9"/><text x="173" y="236.44" class="deg">0°52'</text><rect x="143" y="244" width="16" height="1" fill="#000"/><use href="#g-moon" x="134.4" y="239.91" width="9" height="9"/><use href="#g-mc" x="159.4" y="239.91" width="9" height="9"/><use href="#a-conj" x="147.0" y="239.91" width="9" height="9"/><text x="173" y="248.11" class="deg">0°29'</text><rect x="143" y="256" width="16" height="2" fill="#555"/><use href="#g-mer" x="134.4" y="251.57999999999998" width="9" height="9"/><use href="#g-mar" x="159.4" y="251.57999999999998" width="9" height="9"/><use href="#a-conj" x="147.0" y="251.57999999999998" width="9" height="9"/><text x="173" y="259.78" class="deg">0°12'</text><rect x="143" y="267" width="16" height="1" fill="#000"/><use href="#g-mar" x="134.4" y="263.25" width="9" height="9"/><use href="#g-plu" x="159.4" y="263.25" width="9" height="9"/><use href="#a-conj" x="147.0" y="263.25" width="9" height="9"/><text x="173" y="271.45" class="deg">1°51'</text><rect x="143" y="279" width="16" height="1" fill="#000"/><use href="#g-mar" x="134.4" y="274.92" width="9" height="9"/><use href="#g-mc" x="159.4" y="274.92" width="9" height="9"/><text x="173" y="283.12" class="deg">1°14'</text><rect x="143" y="291" width="16" height="2" fill="#555"/><use href="#g-ura" x="134.4" y="286.59000000000003" width="9" height="9"/><use href="#g-as" x="159.4" y="286.59000000000003" width="9" height="9"/><use href="#a-conj" x="147.0" y="286.59000000000003" width="9" height="9"/><text x="173" y="294.79" class="deg">1°49'</text><use href="#g-mer" x="239.0" y="193.5" width="9" height="9"/><rect x="243" y="203" width="1" height="95.09" fill="#000"/><rect x="235" y="209" width="16" height="1" fill="#000"/><use href="#g-sun" x="226.4" y="204.9" width="9" height="9"/><use href="#g-as" x="251.4" y="204.9" width="9" height="9"/><text x="265" y="213.10" class="deg">1°08'</text><rect x="235" y="221" width="16" height="1" fill="#000"/><use href="#g-moon" x="226.4" y="216.57" width="9" height="9"/><use href="#g-jup" x="251.4" y="216.57" width="9" height="9"/><text x="265" y="224.77" class="deg">0°39'</text><rect x="235" y="232" width="16" height="1" fill="#000"/><use href="#g-mer" x="226.4" y="228.24" width="9" height="9"/><use href="#g-ura" x="251.4" y="228.24" width="9" height="9"/><use href="#a-conj" x="239.0" y="228.24" width="9" height="9"/><text x="265" y="236.44" class="deg">1°06'</text><rect x="235" y="244" width="16" height="1" fill="#000"/><use href="#g-mer" x="226.4" y="239.91" width="9" height="9"/><use href="#g-node" x="251.4" y="239.91" width="9" height="9"/><use href="#a-conj" x="239.0" y="239.91" width="9" height="9"/><text x="265" y="248.11" class="deg">0°17'</text><rect x="235" y="256" width="16" height="2" fill="#555"/><use href="#g-mar" x="226.4" y="251.57999999999998" width="9" height="9"/><use href="#g-jup" x="251.4" y="251.57999999999998" width="9" height="9"/><use href="#a-conj" x="239.0" y="251.57999999999998" width="9" height="9"/><text x="265" y="259.78" class="deg">0°06'</text><rect x="235" y="267" width="16" height="1" fill="#000"/><use href="#g-ura" x="226.4" y="263.25" width="9" height="9"/><use href="#g-nep" x="251.4" y="263.25" width="9" height="9"/><text x="265" y="271.45" class="deg">0°43'</text><rect x="235" y="279" width="16" height="1" fill="#000"/><use href="#g-ura" x="226.4" y="274.92" width="9" height="9"/><use href="#g-mc" x="251.4" y="274.92" width="9" height="9"/><text x="265" y="283.12" class="deg">0°20'</text><rect x="235" y="291" width="16" height="1" fill="#000"/><use href="#g-plu" x="226.4" y="286.59000000000003" width="9" height="9"/><use href="#g-node" x="251.4" y="286.59000000000003" width="9" height="9"/><use href="#a-conj" x="239.0" y="286.59000000000003" width="9" height="9"/><text x="265" y="294.79" class="deg">1°23'</text><use href="#g-ven" x="330.0" y="193.5" width="9" height="9"/><rect x="334" y="203" width="1" height="95.09" fill="#000"/><rect x="326" y="209" width="16" height="1" fill="#000"/><use href="#g-sun" x="317.4" y="204.9" width="9" height="9"/><use href="#g-sat" x="342.4" y="204.9" width="9" height="9"/><use href="#a-conj" x="330.0" y="204.9" width="9" height="9"/><text x="356" y="213.10" class="deg">2°26'</text><rect x="326" y="221" width="16" height="1" fill="#000"/><use href="#g-moon" x="317.4" y="216.57" width="9" height="9"/><use href="#g-jup" x="342.4" y="216.57" width="9" height="9"/><text x="356" y="224.77" class="deg">1°20'</text><rect x="326" y="232" width="16" height="1" fill="#000"/><use href="#g-mer" x="317.4" y="228.24" width="9" height="9"/><use href="#g-ura" x="342.4" y="228.24" width="9" height="9"/><use href="#a-conj" x="330.0" y="228.24" width="9" height="9"/><text x="356" y="236.44" class="deg">0°53'</text><rect x="326" y="244" width="16" height="1" fill="#000"/><use href="#g-mer" x="317.4" y="239.91" width="9" height="9"/><use href="#g-node" x="342.4" y="239.91" width="9" height="9"/><use href="#a-conj" x="330.0" y="239.91" width="9" height="9"/><text x="356" y="248.11" class="deg">2°15'</text><rect x="326" y="256" width="16" height="1" fill="#000"/><use href="#g-mar" x="317.4" y="251.57999999999998" width="9" height="9"/><use href="#g-jup" x="342.4" y="251.57999999999998" width="9" height="9"/><use href="#a-conj" x="330.0" y="251.57999999999998" width="9" height="9"/><text x="356" y="259.78" class="deg">2°05'</text><rect x="326" y="267" width="16" height="1" fill="#000"/><use href="#g-sat" x="317.4" y="263.25" width="9" height="9"/><use href="#g-as" x="342.4" y="263.25" width="9" height="9"/><use href="#a-conj" x="330.0" y="263.25" width="9" height="9"/><text x="356" y="271.45" class="deg">1°45'</text><rect x="326" y="279" width="16" height="1" fill="#000"/><use href="#g-ura" x="317.4" y="274.92" width="9" height="9"/><use href="#g-plu" x="342.4" y="274.92" width="9" height="9"/><use href="#a-conj" x="330.0" y="274.92" width="9" height="9"/><text x="356" y="283.12" class="deg">0°47'</text><rect x="326" y="291" width="16" height="1" fill="#000"/><use href="#g-plu" x="317.4" y="286.59000000000003" width="9" height="9"/><use href="#g-node" x="342.4" y="286.59000000000003" width="9" height="9"/><use href="#a-conj" x="330.0" y="286.59000000000003" width="9" height="9"/><text x="356" y="294.79" class="deg">0°35'</text><use href="#g-mar" x="422.0" y="193.5" width="9" height="9"/><rect x="426" y="203" width="1" height="60.08" fill="#000"/><rect x="418" y="209" width="16" height="1" fill="#000"/><use href="#g-sun" x="409.4" y="204.9" width="9" height="9"/><use href="#g-ven" x="434.4" y="204.9" width="9" height="9"/><use href="#a-sq" x="422.0" y="204.9" width="9" height="9"/><text x="448" y="213.10" class="deg">1°28'</text><rect x="418" y="221" width="16" height="1" fill="#000"/><use href="#g-ven" x="409.4" y="216.57" width="9" height="9"/><use href="#g-as" x="434.4" y="216.57" width="9" height="9"/><use href="#a-sq" x="422.0" y="216.57" width="9" height="9"/><text x="448" y="224.77" class="deg">0°47'</text><rect x="418" y="232" width="16" height="1" fill="#000"/><use href="#g-jup" x="409.4" y="228.24" width="9" height="9"/><use href="#g-sat" x="434.4" y="228.24" width="9" height="9"/><text x="448" y="236.44" class="deg">1°22'</text><rect x="418" y="244" width="16" height="1" fill="#000"/><use href="#g-jup" x="409.4" y="239.91" width="9" height="9"/><use href="#g-nep" x="434.4" y="239.91" width="9" height="9"/><text x="448" y="248.11" class="deg">0°24'</text><rect x="418" y="256" width="16" height="2" fill="#555"/><use href="#g-jup" x="409.4" y="251.57999999999998" width="9" height="9"/><use href="#g-mc" x="434.4" y="251.57999999999998" width="9" height="9"/><text x="448" y="259.78" class="deg">0°47'</text><use href="#g-jup" x="514.0" y="193.5" width="9" height="9"/><rect x="518" y="203" width="1" height="118.43" fill="#000"/><rect x="510" y="209" width="16" height="1" fill="#000"/><use href="#g-sun" x="501.4" y="204.9" width="9" height="9"/><use href="#g-mer" x="526.4" y="204.9" width="9" height="9"/><text x="540" y="213.10" class="deg">0°19'</text><rect x="510" y="221" width="16" height="1" fill="#000"/><use href="#g-sun" x="501.4" y="216.57" width="9" height="9"/><use href="#g-nep" x="526.4" y="216.57" width="9" height="9"/><use href="#a-conj" x="514.0" y="216.57" width="9" height="9"/><text x="540" y="224.77" class="deg">2°07'</text><rect x="510" y="232" width="16" height="1" fill="#000"/><use href="#g-sun" x="501.4" y="228.24" width="9" height="9"/><use href="#g-plu" x="526.4" y="228.24" width="9" height="9"/><text x="540" y="236.44" class="deg">1°21'</text><rect x="510" y="244" width="16" height="1" fill="#000"/><use href="#g-sun" x="501.4" y="239.91" width="9" height="9"/><use href="#g-mc" x="526.4" y="239.91" width="9" height="9"/><use href="#a-conj" x="514.0" y="239.91" width="9" height="9"/><text x="540" y="248.11" class="deg">1°44'</text><rect x="510" y="256" width="16" height="2" fill="#555"/><use href="#g-moon" x="501.4" y="251.57999999999998" width="9" height="9"/><use href="#g-ven" x="526.4" y="251.57999999999998" width="9" height="9"/><text x="540" y="259.78" class="deg">0°02'</text><rect x="510" y="267" width="16" height="1" fill="#000"/><use href="#g-mer" x="501.4" y="263.25" width="9" height="9"/><use href="#g-as" x="526.4" y="263.25" width="9" height="9"/><text x="540" y="271.45" class="deg">1°00'</text><rect x="510" y="279" width="16" height="1" fill="#000"/><use href="#g-ven" x="501.4" y="274.92" width="9" height="9"/><use href="#g-mar" x="526.4" y="274.92" width="9" height="9"/><use href="#a-conj" x="514.0" y="274.92" width="9" height="9"/><text x="540" y="283.12" class="deg">0°43'</text><rect x="510" y="291" width="16" height="1" fill="#000"/><use href="#g-jup" x="501.4" y="286.59000000000003" width="9" height="9"/><use href="#g-ura" x="526.4" y="286.59000000000003" width="9" height="9"/><use href="#a-conj" x="514.0" y="286.59000000000003" width="9" height="9"/><text x="540" y="294.79" class="deg">1°19'</text><rect x="510" y="302" width="16" height="1" fill="#000"/><use href="#g-plu" x="501.4" y="298.26" width="9" height="9"/><use href="#g-as" x="526.4" y="298.26" width="9" height="9"/><text x="540" y="306.46" class="deg">0°39'</text><rect x="510" y="314" width="16" height="1" fill="#000"/><use href="#g-as" x="501.4" y="309.93" width="9" height="9"/><use href="#g-mc" x="526.4" y="309.93" width="9" height="9"/><use href="#a-conj" x="514.0" y="309.93" width="9" height="9"/><text x="540" y="318.13" class="deg">2°26'</text><use href="#g-sat" x="606.0" y="193.5" width="9" height="9"/><rect x="610" y="203" width="1" height="36.74" fill="#000"/><rect x="602" y="209" width="16" height="1" fill="#000"/><use href="#g-moon" x="593.4" y="204.9" width="9" height="9"/><use href="#g-mar" x="618.4" y="204.9" width="9" height="9"/><use href="#a-sq" x="606.0" y="204.9" width="9" height="9"/><text x="632" y="213.10" class="deg">0°57'</text><rect x="602" y="221" width="16" height="2" fill="#555"/><use href="#g-mer" x="593.4" y="216.57" width="9" height="9"/><use href="#g-plu" x="618.4" y="216.57" width="9" height="9"/><use href="#a-conj" x="606.0" y="216.57" width="9" height="9"/><text x="632" y="224.77" class="deg">0°14'</text><rect x="602" y="232" width="16" height="1" fill="#000"/><use href="#g-jup" x="593.4" y="228.24" width="9" height="9"/><use href="#g-sat" x="618.4" y="228.24" width="9" height="9"/><text x="632" y="236.44" class="deg">0°25'</text><use href="#g-ura" x="55.0" y="333.3" width="9" height="9"/><rect x="59" y="342.8" width="1" height="25.77" fill="#000"/><rect x="51" y="349" width="16" height="1" fill="#000"/><use href="#g-moon" x="42.4" y="345.4" width="9" height="9"/><use href="#g-ura" x="67.4" y="345.4" width="9" height="9"/><use href="#a-conj" x="55.0" y="345.4" width="9" height="9"/><text x="81" y="353.60" class="deg">2°05'</text><rect x="51" y="361" width="16" height="1" fill="#000"/><use href="#g-ven" x="42.4" y="357.07" width="9" height="9"/><use href="#g-sat" x="67.4" y="357.07" width="9" height="9"/><text x="81" y="365.27" class="deg">0°07'</text><use href="#g-nep" x="147.0" y="333.3" width="9" height="9"/><rect x="151" y="342.8" width="1" height="60.78" fill="#000"/><rect x="143" y="349" width="16" height="1" fill="#000"/><use href="#g-sun" x="134.4" y="345.4" width="9" height="9"/><use href="#g-moon" x="159.4" y="345.4" width="9" height="9"/><text x="173" y="353.60" class="deg">0°48'</text><rect x="143" y="361" width="16" height="1" fill="#000"/><use href="#g-sun" x="134.4" y="357.07" width="9" height="9"/><use href="#g-mar" x="159.4" y="357.07" width="9" height="9"/><use href="#a-conj" x="147.0" y="357.07" width="9" height="9"/><text x="173" y="365.27" class="deg">1°33'</text><rect x="143" y="373" width="16" height="1" fill="#000"/><use href="#g-moon" x="134.4" y="368.73999999999995" width="9" height="9"/><use href="#g-as" x="159.4" y="368.73999999999995" width="9" height="9"/><text x="173" y="376.94" class="deg">1°29'</text><rect x="143" y="384" width="16" height="1" fill="#000"/><use href="#g-ven" x="134.4" y="380.40999999999997" width="9" height="9"/><use href="#g-plu" x="159.4" y="380.40999999999997" width="9" height="9"/><use href="#a-sq" x="147.0" y="380.40999999999997" width="9" height="9"/><text x="173" y="388.61" class="deg">0°29'</text><rect x="143" y="396" width="16" height="1" fill="#000"/><use href="#g-mar" x="134.4" y="392.08" width="9" height="9"/><use href="#g-as" x="159.4" y="392.08" width="9" height="9"/><use href="#a-conj" x="147.0" y="392.08" width="9" height="9"/><text x="173" y="400.28" class="deg">2°14'</text><use href="#g-plu" x="239.0" y="333.3" width="9" height="9"/><rect x="243" y="342.8" width="1" height="84.12" fill="#000"/><rect x="235" y="349" width="16" height="1" fill="#000"/><use href="#g-sun" x="226.4" y="345.4" width="9" height="9"/><use href="#g-moon" x="251.4" y="345.4" width="9" height="9"/><text x="265" y="353.60" class="deg">0°52'</text><rect x="235" y="361" width="16" height="1" fill="#000"/><use href="#g-sun" x="226.4" y="357.07" width="9" height="9"/><use href="#g-mar" x="251.4" y="357.07" width="9" height="9"/><use href="#a-sq" x="239.0" y="357.07" width="9" height="9"/><text x="265" y="365.27" class="deg">0°07'</text><rect x="235" y="373" width="16" height="1" fill="#000"/><use href="#g-moon" x="226.4" y="368.73999999999995" width="9" height="9"/><use href="#g-as" x="251.4" y="368.73999999999995" width="9" height="9"/><text x="265" y="376.94" class="deg">0°11'</text><rect x="235" y="384" width="16" height="1" fill="#000"/><use href="#g-mer" x="226.4" y="380.40999999999997" width="9" height="9"/><use href="#g-ven" x="251.4" y="380.40999999999997" width="9" height="9"/><use href="#a-conj" x="239.0" y="380.40999999999997" width="9" height="9"/><text x="265" y="388.61" class="deg">0°28'</text><rect x="235" y="396" width="16" height="1" fill="#000"/><use href="#g-ven" x="226.4" y="392.08" width="9" height="9"/><use href="#g-plu" x="251.4" y="392.08" width="9" height="9"/><use href="#a-conj" x="239.0" y="392.08" width="9" height="9"/><text x="265" y="400.28" class="deg">1°11'</text><rect x="235" y="408" width="16" height="1" fill="#000"/><use href="#g-mar" x="226.4" y="403.75" width="9" height="9"/><use href="#g-as" x="251.4" y="403.75" width="9" height="9"/><use href="#a-sq" x="239.0" y="403.75" width="9" height="9"/><text x="265" y="411.95" class="deg">0°34'</text><rect x="235" y="419" width="16" height="1" fill="#000"/><use href="#g-ura" x="226.4" y="415.41999999999996" width="9" height="9"/><use href="#g-node" x="251.4" y="415.41999999999996" width="9" height="9"/><text x="265" y="423.62" class="deg">1°03'</text><use href="#g-as" x="330.0" y="333.3" width="9" height="9"/><rect x="334" y="342.8" width="1" height="84.12" fill="#000"/><rect x="326" y="349" width="16" height="1" fill="#000"/><use href="#g-sun" x="317.4" y="345.4" width="9" height="9"/><use href="#g-ven" x="342.4" y="345.4" width="9" height="9"/><use href="#a-conj" x="330.0" y="345.4" width="9" height="9"/><text x="356" y="353.60" class="deg">1°06'</text><rect x="326" y="361" width="16" height="1" fill="#000"/><use href="#g-moon" x="317.4" y="357.07" width="9" height="9"/><use href="#g-node" x="342.4" y="357.07" width="9" height="9"/><use href="#a-sq" x="330.0" y="357.07" width="9" height="9"/><text x="356" y="365.27" class="deg">0°25'</text><rect x="326" y="373" width="16" height="1" fill="#000"/><use href="#g-mer" x="317.4" y="368.73999999999995" width="9" height="9"/><use href="#g-jup" x="342.4" y="368.73999999999995" width="9" height="9"/><use href="#a-conj" x="330.0" y="368.73999999999995" width="9" height="9"/><text x="356" y="376.94" class="deg">0°21'</text><rect x="326" y="384" width="16" height="1" fill="#000"/><use href="#g-ven" x="317.4" y="380.40999999999997" width="9" height="9"/><use href="#g-as" x="342.4" y="380.40999999999997" width="9" height="9"/><use href="#a-conj" x="330.0" y="380.40999999999997" width="9" height="9"/><text x="356" y="388.61" class="deg">1°47'</text><rect x="326" y="396" width="16" height="1" fill="#000"/><use href="#g-mar" x="317.4" y="392.08" width="9" height="9"/><use href="#g-ura" x="342.4" y="392.08" width="9" height="9"/><text x="356" y="400.28" class="deg">1°02'</text><rect x="326" y="408" width="16" height="1" fill="#000"/><use href="#g-mar" x="317.4" y="403.75" width="9" height="9"/><use href="#g-node" x="342.4" y="403.75" width="9" height="9"/><text x="356" y="411.95" class="deg">0°20'</text><rect x="326" y="419" width="16" height="1" fill="#000"/><use href="#g-jup" x="317.4" y="415.41999999999996" width="9" height="9"/><use href="#g-plu" x="342.4" y="415.41999999999996" width="9" height="9"/><use href="#a-conj" x="330.0" y="415.41999999999996" width="9" height="9"/><text x="356" y="423.62" class="deg">1°18'</text><use href="#g-mc" x="422.0" y="333.3" width="9" height="9"/><rect x="426" y="342.8" width="1" height="72.45" fill="#000"/><rect x="418" y="349" width="16" height="1" fill="#000"/><use href="#g-sun" x="409.4" y="345.4" width="9" height="9"/><use href="#g-mar" x="434.4" y="345.4" width="9" height="9"/><use href="#a-conj" x="422.0" y="345.4" width="9" height="9"/><text x="448" y="353.60" class="deg">2°00'</text><rect x="418" y="361" width="16" height="1" fill="#000"/><use href="#g-mer" x="409.4" y="357.07" width="9" height="9"/><use href="#g-ven" x="434.4" y="357.07" width="9" height="9"/><use href="#a-sq" x="422.0" y="357.07" width="9" height="9"/><text x="448" y="365.27" class="deg">1°25'</text><rect x="418" y="373" width="16" height="1" fill="#000"/><use href="#g-ven" x="409.4" y="368.73999999999995" width="9" height="9"/><use href="#g-nep" x="434.4" y="368.73999999999995" width="9" height="9"/><text x="448" y="376.94" class="deg">0°24'</text><rect x="418" y="384" width="16" height="1" fill="#000"/><use href="#g-ven" x="409.4" y="380.40999999999997" width="9" height="9"/><use href="#g-mc" x="434.4" y="380.40999999999997" width="9" height="9"/><text x="448" y="388.61" class="deg">0°01'</text><rect x="418" y="396" width="16" height="1" fill="#000"/><use href="#g-mar" x="409.4" y="392.08" width="9" height="9"/><use href="#g-as" x="434.4" y="392.08" width="9" height="9"/><use href="#a-conj" x="422.0" y="392.08" width="9" height="9"/><text x="448" y="400.28" class="deg">1°19'</text><rect x="418" y="408" width="16" height="1" fill="#000"/><use href="#g-ura" x="409.4" y="403.75" width="9" height="9"/><use href="#g-node" x="434.4" y="403.75" width="9" height="9"/><text x="448" y="411.95" class="deg">0°50'</text><use href="#g-node" x="514.0" y="333.3" width="9" height="9"/><rect x="518" y="342.8" width="1" height="49.11" fill="#000"/><rect x="510" y="349" width="16" height="1" fill="#000"/><use href="#g-moon" x="501.4" y="345.4" width="9" height="9"/><use href="#g-mar" x="526.4" y="345.4" width="9" height="9"/><text x="540" y="353.60" class="deg">0°31'</text><rect x="510" y="361" width="16" height="1" fill="#000"/><use href="#g-mer" x="501.4" y="357.07" width="9" height="9"/><use href="#g-plu" x="526.4" y="357.07" width="9" height="9"/><text x="540" y="365.27" class="deg">0°12'</text><rect x="510" y="373" width="16" height="1" fill="#000"/><use href="#g-jup" x="501.4" y="368.73999999999995" width="9" height="9"/><use href="#g-sat" x="526.4" y="368.73999999999995" width="9" height="9"/><use href="#a-sq" x="514.0" y="368.73999999999995" width="9" height="9"/><text x="540" y="376.94" class="deg">0°51'</text><rect x="510" y="384" width="16" height="1" fill="#000"/><use href="#g-plu" x="501.4" y="380.40999999999997" width="9" height="9"/><use href="#g-mc" x="526.4" y="380.40999999999997" width="9" height="9"/><use href="#a-sq" x="514.0" y="380.40999999999997" width="9" height="9"/><text x="540" y="388.61" class="deg">1°14'</text><use href="#g-sun" x="55.0" y="462.1" width="9" height="9"/><rect x="59" y="471.6" width="1" height="60.18" fill="#000"/><rect x="51" y="478" width="16" height="1" fill="#000"/><use href="#g-sun" x="42.4" y="473.6" width="9" height="9"/><use href="#g-node" x="67.4" y="473.6" width="9" height="9"/><use href="#a-conj" x="55.0" y="473.6" width="9" height="9"/><text x="81" y="481.80" class="deg">0°31'</text><rect x="51" y="489" width="16" height="2" fill="#555"/><use href="#g-moon" x="42.4" y="485.27000000000004" width="9" height="9"/><use href="#g-jup" x="67.4" y="485.27000000000004" width="9" height="9"/><text x="81" y="493.47" class="deg">1°29'</text><rect x="51" y="501" width="16" height="1" fill="#000"/><use href="#g-mer" x="42.4" y="496.94" width="9" height="9"/><use href="#g-ven" x="67.4" y="496.94" width="9" height="9"/><text x="81" y="505.14" class="deg">1°26'</text><rect x="51" y="513" width="16" height="1" fill="#000"/><use href="#g-ura" x="42.4" y="508.61" width="9" height="9"/><use href="#g-node" x="67.4" y="508.61" width="9" height="9"/><use href="#a-conj" x="55.0" y="508.61" width="9" height="9"/><text x="81" y="516.81" class="deg">0°08'</text><rect x="51" y="524" width="16" height="2" fill="#555"/><use href="#g-mc" x="42.4" y="520.28" width="9" height="9"/><use href="#g-node" x="67.4" y="520.28" width="9" height="9"/><use href="#a-conj" x="55.0" y="520.28" width="9" height="9"/><text x="81" y="528.48" class="deg">1°10'</text><use href="#g-moon" x="147.0" y="462.1" width="9" height="9"/><rect x="151" y="471.6" width="1" height="13.50" fill="#000"/><rect x="143" y="478" width="16" height="1" fill="#000"/><use href="#g-mar" x="134.4" y="473.6" width="9" height="9"/><use href="#g-sat" x="159.4" y="473.6" width="9" height="9"/><use href="#a-conj" x="147.0" y="473.6" width="9" height="9"/><text x="173" y="481.80" class="deg">1°06'</text><use href="#g-mer" x="239.0" y="462.1" width="9" height="9"/><use href="#g-ven" x="330.0" y="462.1" width="9" height="9"/><rect x="334" y="471.6" width="1" height="71.85" fill="#000"/><rect x="326" y="478" width="16" height="1" fill="#000"/><use href="#g-moon" x="317.4" y="473.6" width="9" height="9"/><use href="#g-mer" x="342.4" y="473.6" width="9" height="9"/><use href="#a-conj" x="330.0" y="473.6" width="9" height="9"/><text x="356" y="481.80" class="deg">1°40'</text><rect x="326" y="489" width="16" height="1" fill="#000"/><use href="#g-moon" x="317.4" y="485.27000000000004" width="9" height="9"/><use href="#g-ven" x="342.4" y="485.27000000000004" width="9" height="9"/><use href="#a-conj" x="330.0" y="485.27000000000004" width="9" height="9"/><text x="356" y="493.47" class="deg">0°41'</text><rect x="326" y="501" width="16" height="1" fill="#000"/><use href="#g-moon" x="317.4" y="496.94" width="9" height="9"/><use href="#g-jup" x="342.4" y="496.94" width="9" height="9"/><use href="#a-conj" x="330.0" y="496.94" width="9" height="9"/><text x="356" y="505.14" class="deg">2°29'</text><rect x="326" y="513" width="16" height="1" fill="#000"/><use href="#g-jup" x="317.4" y="508.61" width="9" height="9"/><use href="#g-nep" x="342.4" y="508.61" width="9" height="9"/><use href="#a-sq" x="330.0" y="508.61" width="9" height="9"/><text x="356" y="516.81" class="deg">0°51'</text><rect x="326" y="524" width="16" height="1" fill="#000"/><use href="#g-ura" x="317.4" y="520.28" width="9" height="9"/><use href="#g-node" x="342.4" y="520.28" width="9" height="9"/><text x="356" y="528.48" class="deg">1°08'</text><rect x="326" y="536" width="16" height="1" fill="#000"/><use href="#g-as" x="317.4" y="531.95" width="9" height="9"/><use href="#g-node" x="342.4" y="531.95" width="9" height="9"/><use href="#a-conj" x="330.0" y="531.95" width="9" height="9"/><text x="356" y="540.15" class="deg">0°48'</text><use href="#g-mar" x="422.0" y="462.1" width="9" height="9"/><use href="#g-jup" x="514.0" y="462.1" width="9" height="9"/><rect x="518" y="471.6" width="1" height="130.20" fill="#000"/><rect x="510" y="478" width="16" height="1" fill="#000"/><use href="#g-sun" x="501.4" y="473.6" width="9" height="9"/><use href="#g-ura" x="526.4" y="473.6" width="9" height="9"/><use href="#a-sq" x="514.0" y="473.6" width="9" height="9"/><text x="540" y="481.80" class="deg">1°17'</text><rect x="510" y="489" width="16" height="2" fill="#555"/><use href="#g-sun" x="501.4" y="485.27000000000004" width="9" height="9"/><use href="#g-plu" x="526.4" y="485.27000000000004" width="9" height="9"/><text x="540" y="493.47" class="deg">0°41'</text><rect x="510" y="501" width="16" height="1" fill="#000"/><use href="#g-sun" x="501.4" y="496.94" width="9" height="9"/><use href="#g-mc" x="526.4" y="496.94" width="9" height="9"/><use href="#a-sq" x="514.0" y="496.94" width="9" height="9"/><text x="540" y="505.14" class="deg">0°15'</text><rect x="510" y="513" width="16" height="1" fill="#000"/><use href="#g-moon" x="501.4" y="508.61" width="9" height="9"/><use href="#g-mar" x="526.4" y="508.61" width="9" height="9"/><use href="#a-conj" x="514.0" y="508.61" width="9" height="9"/><text x="540" y="516.81" class="deg">1°16'</text><rect x="510" y="524" width="16" height="1" fill="#000"/><use href="#g-moon" x="501.4" y="520.28" width="9" height="9"/><use href="#g-sat" x="526.4" y="520.28" width="9" height="9"/><text x="540" y="528.48" class="deg">0°22'</text><rect x="510" y="536" width="16" height="1" fill="#000"/><use href="#g-ura" x="501.4" y="531.95" width="9" height="9"/><use href="#g-nep" x="526.4" y="531.95" width="9" height="9"/><use href="#a-sq" x="514.0" y="531.95" width="9" height="9"/><text x="540" y="540.15" class="deg">1°08'</text><rect x="510" y="548" width="16" height="1" fill="#000"/><use href="#g-ura" x="501.4" y="543.62" width="9" height="9"/><use href="#g-plu" x="526.4" y="543.62" width="9" height="9"/><text x="540" y="551.82" class="deg">0°18'</text><rect x="510" y="559" width="16" height="2" fill="#555"/><use href="#g-ura" x="501.4" y="555.29" width="9" height="9"/><use href="#g-mc" x="526.4" y="555.29" width="9" height="9"/><use href="#a-sq" x="514.0" y="555.29" width="9" height="9"/><text x="540" y="563.49" class="deg">0°39'</text><rect x="510" y="571" width="16" height="1" fill="#000"/><use href="#g-nep" x="501.4" y="566.96" width="9" height="9"/><use href="#g-as" x="526.4" y="566.96" width="9" height="9"/><text x="540" y="575.16" class="deg">0°48'</text><rect x="510" y="583" width="16" height="1" fill="#000"/><use href="#g-plu" x="501.4" y="578.63" width="9" height="9"/><use href="#g-as" x="526.4" y="578.63" width="9" height="9"/><use href="#a-conj" x="514.0" y="578.63" width="9" height="9"/><text x="540" y="586.83" class="deg">1°38'</text><rect x="510" y="594" width="16" height="1" fill="#000"/><use href="#g-plu" x="501.4" y="590.3000000000001" width="9" height="9"/><use href="#g-mc" x="526.4" y="590.3000000000001" width="9" height="9"/><text x="540" y="598.50" class="deg">1°20'</text><use href="#g-sat" x="606.0" y="462.1" width="9" height="9"/><rect x="610" y="471.6" width="1" height="25.17" fill="#000"/><rect x="602" y="478" width="16" height="1" fill="#000"/><use href="#g-mer" x="593.4" y="473.6" width="9" height="9"/><use href="#g-node" x="618.4" y="473.6" width="9" height="9"/><use href="#a-sq" x="606.0" y="473.6" width="9" height="9"/><text x="632" y="481.80" class="deg">0°19'</text><rect x="602" y="489" width="16" height="1" fill="#000"/><use href="#g-ven" x="593.4" y="485.27000000000004" width="9" height="9"/><use href="#g-node" x="618.4" y="485.27000000000004" width="9" height="9"/><use href="#a-sq" x="606.0" y="485.27000000000004" width="9" height="9"/><text x="632" y="493.47" class="deg">0°40'</text>
<!-- right panel -->
<rect x="692" y="95.8" width="217" height="26.2" rx="1" fill="#e8fbe8" stroke="#1a1af0" stroke-width="1.7"/>
<text class="rpb" x="695.8" y="107.2" style="fill:#1818c0;stroke:#1818c0" textLength="95" lengthAdjust="spacingAndGlyphs">DISPLAYED CHART:</text>
<text class="rpb" x="693.3" y="117.7" style="fill:#1818c0;stroke:#1818c0" textLength="138" lengthAdjust="spacingAndGlyphs">11: Lincoln,Abraham - Natal</text>
<rect x="691.75" y="129.75" width="217.5" height="24.5" fill="#cbe5e9" stroke="#000" stroke-width="1.5"/>
<text class="rpb" x="746.6" y="139.7" style="fill:#101070;stroke:#101070" textLength="107.6" lengthAdjust="spacingAndGlyphs">CALCULATED CHARTS</text>
<text class="rpb" x="760.5" y="150.9" style="fill:#101070;stroke:#101070" textLength="79.4" lengthAdjust="spacingAndGlyphs">(Click to Select)</text>
<rect x="693.5" y="134.8" width="13.2" height="14" fill="#222"/><rect x="693.5" y="134.8" width="12.2" height="13" fill="#fff"/><rect x="694.5" y="135.8" width="11.2" height="12" fill="#c6c6c6"/>
<path d="M702.5,138 L697.8,141.8 L702.5,145.6Z" fill="#000"/>
<rect x="892.6" y="134.8" width="14.7" height="14" fill="#222"/><rect x="892.6" y="134.8" width="13.7" height="13" fill="#fff"/><rect x="893.6" y="135.8" width="12.7" height="12" fill="#c6c6c6"/>
<path d="M897.5,138 L902.2,141.8 L897.5,145.6Z" fill="#000"/>
<rect x="692" y="154.5" width="217" height="210" fill="#fff"/>
<rect x="691.5" y="154.5" width="218" height="210" fill="none" stroke="#9a9a9a" stroke-width="1"/>
<svg x="692" y="155" width="217" height="209" overflow="hidden"><g transform="translate(-692,-154.2) translate(694.6,0) scale(0.955,1) translate(-694.6,0)"><text class="rp" x="694.6" y="164.50" style="transform-box:fill-box">1: Jackson,Michael (1958) - Natal</text><text class="rp" x="694.6" y="176.19" style="transform-box:fill-box">2: Bach,Johann Sebastian - Natal</text><text class="rp" x="694.6" y="187.88" style="transform-box:fill-box">3: Bolivar,Simon - Natal</text><text class="rp" x="694.6" y="199.57" style="transform-box:fill-box">4: Bonaparte,Napoleon Charle - Natal</text><text class="rp" x="694.6" y="211.26" style="transform-box:fill-box">5: Beethoven,Ludwig Van - Natal</text><text class="rp" x="694.6" y="222.95" style="transform-box:fill-box">6: Vivaldi,Antonio - Natal</text><text class="rp" x="694.6" y="234.64" style="transform-box:fill-box">7: Chopin,Frederic - Natal</text><text class="rp" x="694.6" y="246.33" style="transform-box:fill-box">8: Jackson,Michael (1958) - Natal</text><text class="rp" x="694.6" y="258.02" style="transform-box:fill-box">9: Presley,Elvis - Natal</text><text class="rp" x="694.6" y="269.71" style="transform-box:fill-box">10: Jackson,Michael (1958) - Secondary Progression</text><text class="rp" x="694.6" y="281.40" style="transform-box:fill-box">12: Jefferson,Thomas - Natal</text><text class="rp" x="694.6" y="293.09" style="transform-box:fill-box">13: Lincoln,Mary Todd - Natal</text><text class="rp" x="694.6" y="304.78" style="transform-box:fill-box">14: Washington,George - Natal</text><text class="rp" x="694.6" y="316.47" style="transform-box:fill-box">15: Lincoln,Abraham - Secondary Progression</text><text class="rp" x="694.6" y="328.16" style="transform-box:fill-box">16: Lincoln,Abraham - Phase Angle Return 2-15-2019</text></g></svg>
<rect x="691.75" y="371.75" width="217.5" height="37.5" fill="#cbe5e9" stroke="#000" stroke-width="1.5"/>
<text class="rpb" x="741.6" y="381.2" style="fill:#101070;stroke:#101070" textLength="118.5" lengthAdjust="spacingAndGlyphs">REPORTS SELECTED FOR</text>
<text class="rpb" x="740.3" y="393.6" style="fill:#000;stroke:#000" textLength="121" lengthAdjust="spacingAndGlyphs">Lincoln,Abraham - Natal</text>
<text class="rpb" x="761.1" y="405.9" style="fill:#101070;stroke:#101070" textLength="79.4" lengthAdjust="spacingAndGlyphs">(Click to Select)</text>
<rect x="692" y="409.5" width="217" height="166" fill="#fefde6"/>
<rect x="691.5" y="409.5" width="218" height="166" fill="none" stroke="#9a9a9a" stroke-width="1"/>
<svg x="692" y="409" width="201" height="166" overflow="hidden"><g transform="translate(-692,-409)"><text class="rp" x="694" y="420.20" transform="translate(694,0) scale(0.95,1) translate(-694,0)">Natal Interp 9AA: Planetary Hours</text><text class="rp" x="694" y="431.89" transform="translate(694,0) scale(0.95,1) translate(-694,0)">Natal Interp 9AB: Plan Hour and Asc</text><text class="rp" x="694" y="443.58" transform="translate(694,0) scale(0.95,1) translate(-694,0)">Natal Interp 1AB: Firdaria (Nodes 2 yr/2yr Variant)</text><text class="rp" x="694" y="455.27" transform="translate(694,0) scale(0.95,1) translate(-694,0)">Natal Interp JAA: No Interpretation - Data Only</text><text class="rp" x="694" y="466.96" transform="translate(694,0) scale(0.95,1) translate(-694,0)">Van Dam Primary Directions List</text><text class="rp" x="694" y="478.65" transform="translate(694,0) scale(0.95,1) translate(-694,0)">Natal Interp 1CA: Huber Age Point</text><text class="rp" x="694" y="490.34" transform="translate(694,0) scale(0.95,1) translate(-694,0)">Log. Time Arcs</text><text class="rp" x="694" y="502.03" transform="translate(694,0) scale(0.95,1) translate(-694,0)">Natal Interp WAA: Explanation of AstroMap</text><text class="rp" x="694" y="513.72" transform="translate(694,0) scale(0.95,1) translate(-694,0)">Natal Interp WAE: Explanation of AstroMap</text><text class="rp" x="694" y="525.41" transform="translate(694,0) scale(0.95,1) translate(-694,0)">Tran. Interp JCE: Transit-to-Transit Text Listing</text><text class="rp" x="694" y="537.10" transform="translate(694,0) scale(0.95,1) translate(-694,0)">Tran. Interp AAG: Transit-to-Natal Text Listing</text><text class="rp" x="694" y="548.79" transform="translate(694,0) scale(0.95,1) translate(-694,0)">QuadWh BDA w/ #12(IM), #13(OM) &amp; #14(OM)</text><text class="rp" x="694" y="560.48" transform="translate(694,0) scale(0.95,1) translate(-694,0)">Midpoints</text><rect x="692" y="563.37" width="201" height="11" fill="#0078d7"/><rect x="692.5" y="563.87" width="200" height="10.6" fill="none" stroke="#f0a030" stroke-width="1" stroke-dasharray="1 1"/><text class="rp" x="694" y="572.17" transform="translate(694,0) scale(0.95,1) translate(-694,0)" style="fill:#fff;stroke:#fff">Midpoint Comparison  with entry 13</text></g></svg>
<rect x="894.5" y="411" width="14" height="164" fill="#f0f0f0"/>
<rect x="894.5" y="504.3" width="14" height="54.7" fill="#cdcdcd"/>
<path d="M898.5,421 L901.5,418 L904.5,421" fill="none" stroke="#000" stroke-width="1.4"/>
<path d="M898.5,565.5 L901.5,568.5 L904.5,565.5" fill="none" stroke="#000" stroke-width="1.4"/>
<rect x="693" y="575.5" width="75.5" height="16.5" fill="#e1e1e1"/>
<rect x="693.5" y="576" width="74.5" height="15.5" fill="none" stroke="#fff" stroke-width="1"/>
<path d="M693,591.5 H768.5 V575.5" fill="none" stroke="#333" stroke-width="1"/>
<rect x="770" y="575.5" width="139" height="16.5" fill="#e1e1e1"/>
<rect x="770.5" y="576" width="138" height="15.5" fill="none" stroke="#fff" stroke-width="1"/>
<path d="M770,591.5 H909 V575.5" fill="none" stroke="#333" stroke-width="1"/>
<text class="rp" x="718.5" y="587.6" textLength="24" lengthAdjust="spacingAndGlyphs">Clear</text>
<text class="rpb" style="stroke:#000" x="809.8" y="587.6" textLength="60.5" lengthAdjust="spacingAndGlyphs">Multi-Select</text>
</svg>
</body></html>
